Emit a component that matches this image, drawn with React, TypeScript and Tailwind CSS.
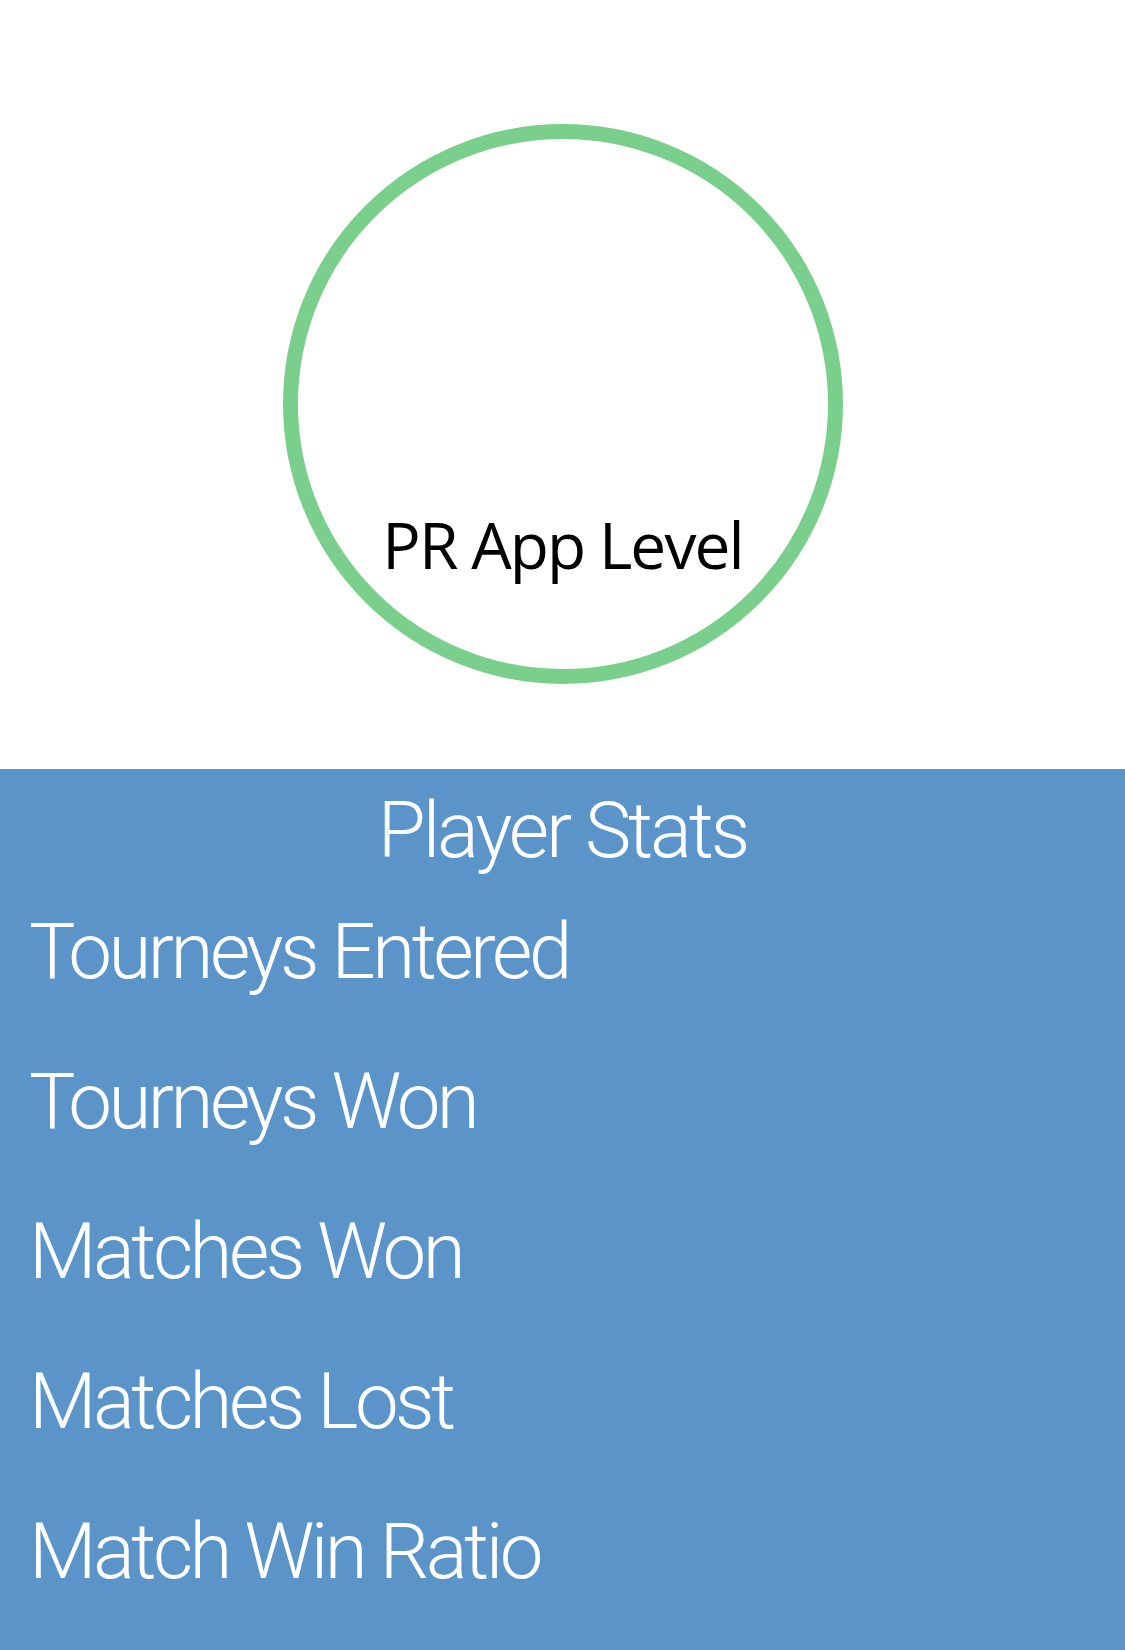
import React from "react";

const stats = [
  "Tourneys Entered",
  "Tourneys Won",
  "Matches Won",
  "Matches Lost",
  "Match Win Ratio",
];

export default function App() {
  return (
    <div className="w-full min-h-[1650px] bg-white flex flex-col">
      {/* Level ring */}
      <div className="h-[769px] flex justify-center pt-[124px]">
        <div className="w-[560px] h-[560px] rounded-full border-[15px] border-[#7acf8c] flex flex-col items-center justify-end pb-[92px]">
          <span className="font-['Open_Sans',sans-serif] text-[64px] leading-[64px] tracking-[-0.03em] text-black">
            PR App Level
          </span>
        </div>
      </div>

      {/* Stats panel */}
      <div className="flex-1 bg-[#5a94c8] text-white font-['Roboto',sans-serif] font-light">
        <div className="h-[108px] pt-[16px] text-center text-[78px] leading-[92px] tracking-[-0.04em]">
          Player Stats
        </div>
        {stats.map((s) => (
          <div
            key={s}
            className="h-[150px] pl-[29px] text-[78px] leading-[150px] tracking-[-0.045em]"
          >
            {s}
          </div>
        ))}
      </div>
    </div>
  );
}
